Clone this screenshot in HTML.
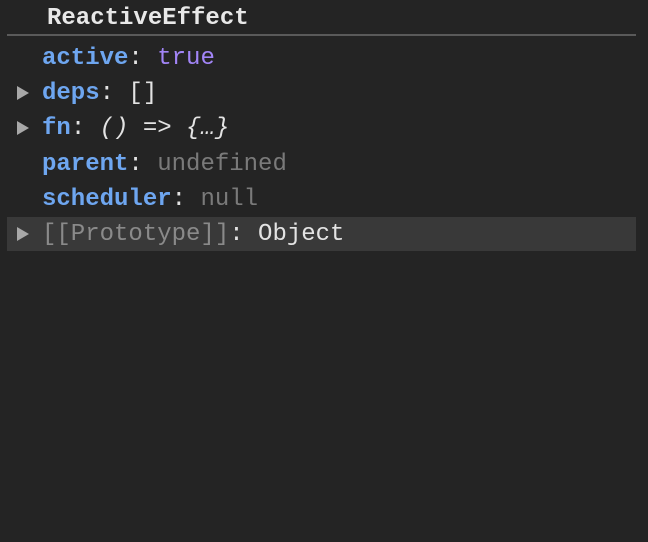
<!DOCTYPE html>
<html><head><style>
html,body{margin:0;padding:0;background:#242424;width:648px;height:542px;overflow:hidden}
body{font-family:"Liberation Mono",monospace;font-size:24px;color:#e3e3e3;position:relative}
.r{position:absolute;left:42px;height:35px;line-height:35px;white-space:pre}
.k{color:#6ea6f0;font-weight:bold}
.tri{position:absolute;left:17px;width:0;height:0;border-top:7px solid transparent;border-bottom:7px solid transparent;border-left:12px solid #a8a8a8}
</style></head><body>
<div class="r" style="left:47px;top:1px;font-weight:bold;color:#e8e8e8">ReactiveEffect</div>
<div style="position:absolute;left:7px;top:34px;width:629px;height:2px;background:#5a5a5a"></div>
<div class="r" style="top:41px"><span class="k">active</span>: <span style="color:#a285f7">true</span></div>
<div class="tri" style="top:86px"></div>
<div class="r" style="top:76px"><span class="k">deps</span>: []</div>
<div class="tri" style="top:121px"></div>
<div class="r" style="top:111px"><span class="k">fn</span>: <i>() =&gt; {…}</i></div>
<div class="r" style="top:147px"><span class="k">parent</span>: <span style="color:#7a7a7a">undefined</span></div>
<div class="r" style="top:182px"><span class="k">scheduler</span>: <span style="color:#7a7a7a">null</span></div>
<div style="position:absolute;left:7px;top:217px;width:629px;height:34px;background:#393939"></div>
<div class="tri" style="top:227px"></div>
<div class="r" style="top:217px"><span style="color:#8a8a8a">[[Prototype]]</span>: Object</div>
</body></html>
